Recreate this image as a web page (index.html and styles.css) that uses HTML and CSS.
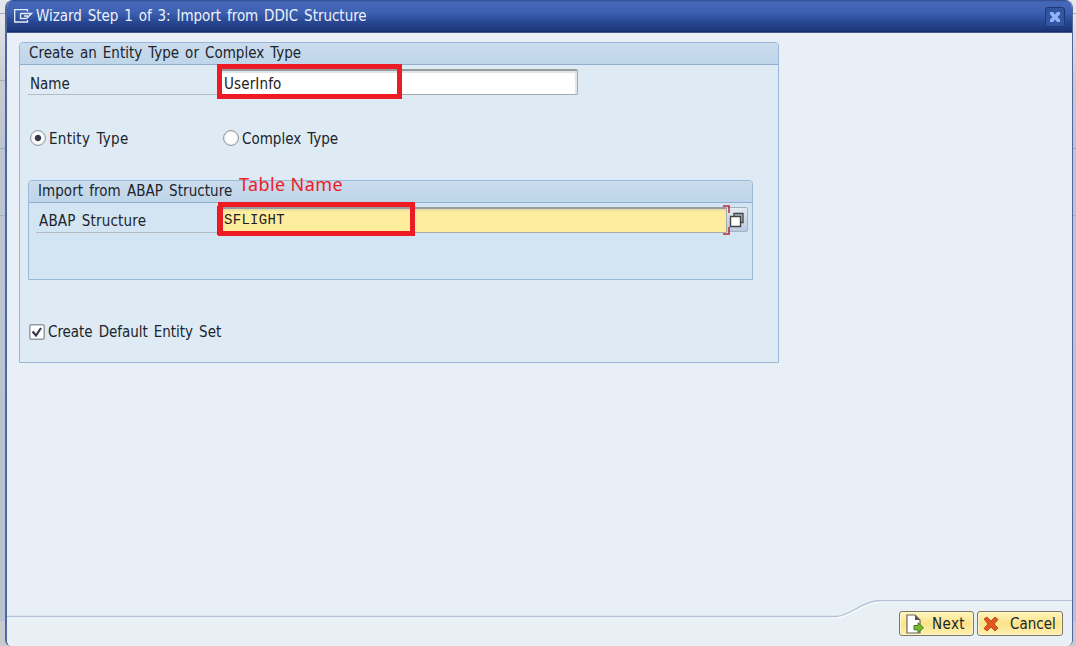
FILE: index.html
```html
<!DOCTYPE html>
<html lang="en">
<head>
<meta charset="utf-8">
<title>Wizard Step 1 of 3: Import from DDIC Structure</title>
<link rel="stylesheet" href="styles.css">
</head>
<body>
<div class="desktop">
  <main class="window">
    <header class="titlebar">
      <svg class="title-icon" width="20" height="16" viewBox="0 0 20 16" fill="none" stroke="#e4ebf8" stroke-width="1.3"><path d="M14.500 3.500V1.700H1.700V14H14.500V12M7.500 5.500V10.500H13.500L18.500 5.500H7.500M11 8h4"/></svg>
      <h1 class="title">Wizard Step 1 of 3: Import from DDIC Structure</h1>
      <button class="close" aria-label="Close"><svg width="12" height="12" viewBox="0 0 12 12"><path d="M1 1h3l2 2.500L8 1h3v2.500L8.500 6 11 8.500V11H8L6 8.500 4 11H1V8.500L3.500 6 1 3.500z" fill="#91b4f7"/></svg></button>
    </header>
    <div class="content">
      <section class="group">
        <h2 class="group-head"><span class="t-create">Create an Entity Type or Complex Type</span></h2>
        <div class="row name-row">
          <label class="label t-name">Name</label>
          <div class="field name-field"><span class="t-user">UserInfo</span><i class="mark mark-name"></i></div>
        </div>
        <div class="radios">
          <label class="choice first"><i class="radio on"></i><span class="t-entity">Entity Type</span></label>
          <label class="choice"><i class="radio"></i><span class="t-complex">Complex Type</span></label>
        </div>
        <section class="group inner">
          <h2 class="group-head"><span class="t-import">Import from ABAP Structure</span><em class="note">Table Name</em></h2>
          <div class="row abap-row">
            <label class="label t-abap">ABAP Structure</label>
            <div class="field abap-field"><span class="t-flight">SFLIGHT</span>
              <i class="bracket"></i><i class="mark mark-abap"></i></div>
            <button class="help" aria-label="Search help"><svg width="16" height="16" viewBox="0 0 16 16"><path d="M5 1.500h9v9H5z" fill="#a8b8b8" stroke="#444" stroke-width="1.300"/><path d="M1.500 4.500h10v10h-10z" fill="#fff" stroke="#444" stroke-width="1.400"/></svg></button>
            <svg class="corners" width="9" height="30" viewBox="0 0 9 30" fill="none" stroke="#b92732" stroke-width="1.500"><path d="M0 1h6v7M6 22v7H0"/></svg>
          </div>
        </section>
        <label class="choice check"><svg width="16" height="16" viewBox="0 0 16 16"><rect x=".8" y=".8" width="14.400" height="14.400" rx="1.500" fill="#fff" stroke="#999c9f" stroke-width="1.500"/><path d="M3.500 7.500 7 11.500 12 4" fill="none" stroke="#34344d" stroke-width="2.200"/></svg><span class="t-default">Create Default Entity Set</span></label>
      </section>
    </div>
    <footer class="footer">
      <svg class="footer-line" width="1065" height="46" viewBox="0 0 1065 46" fill="none"><path d="M0 16.500H829C842 16.500 856 .500 873 .500H1065V46H0z" fill="#e9f0f5"/><path d="M0 17.800H830C843 17.800 857 1.800 874 1.800H1065" stroke="#fff"/><path d="M0 16.500H829C842 16.500 856 .500 873 .500H1065" stroke="#b4c3da" stroke-width="1.300"/></svg>
      <button class="btn next"><svg width="20" height="20" viewBox="0 0 20 20"><path d="M2 1h8l5 5v13H2z" fill="#fff" stroke="#666" stroke-width="1.200"/><path d="M10 1v5h5z" fill="#555"/><path d="M9 11.500h4V8.800l5.500 5-5.500 5v-3H9z" fill="#76b82e" stroke="#3f7d20"/></svg><span class="t-next">Next</span></button>
      <button class="btn cancel"><svg width="16" height="16" viewBox="0 0 16 16"><path d="M1 3 4 1l4 4 4-4 3 2.500L11 8l4 4-3 3-4-4-4 4-3-2.500L5 8z" fill="#e2571e" stroke="#b94d21"/></svg><span class="t-cancel">Cancel</span></button>
    </footer>
  </main>
</div>
</body>
</html>
```
FILE: styles.css
```css
* { box-sizing: border-box; }
body { margin: 0; font: 15px/20px "DejaVu Sans Condensed", "DejaVu Sans", sans-serif; font-stretch: condensed; word-spacing: 1.8px; color: #20242b; }
h1, h2 { margin: 0; font-size: inherit; font-weight: 400; }
button { padding: 0; font: inherit; color: inherit; }
svg { display: block; flex: none; }
span, .title, .label { white-space: nowrap; }
.desktop { width: 1076px; height: 646px; overflow: hidden; padding-left: 5px; background: linear-gradient(#a0aec0, #a0aec0) 0 13px / 100% 1px no-repeat, linear-gradient(#a3b3bd, #a3b3bd) 0 80px / 5px 1px no-repeat, linear-gradient(#94a9b1, #94a9b1) 0 148px / 100% 1px no-repeat, linear-gradient(#a3b3bd, #a3b3bd) 0 215px / 100% 1px no-repeat, linear-gradient(#e3e7eb 0 13px, #c8ccd1 80px, #bcc5d0 148px, #b9c2d0 621px, #c7cbd0 622px); }
.window { display: flex; flex-direction: column; width: 1068px; height: 646px; background: #e8eff6; border: solid #4f679e; border-width: 0 1px 0 2px; border-radius: 8px 8px 6px 6px; overflow: hidden; }
.titlebar { display: flex; align-items: center; height: 33px; padding: 0 7px 2px 6px; background: linear-gradient(#2e4a8d 0, #4668b9 2px, #3f61b2 12px, #2c4c99 20px, #1b3678 31px, #0d265f 32px, #7b8fb5 33px); color: #edf2fc; }
.title { margin: 1px 0 0 3px; word-spacing: 1.6px; letter-spacing: -.02px; }
.close { display: grid; place-items: center; width: 20px; height: 20px; margin: 3px 0 0 auto; border: 1px solid #1d3873; border-radius: 3px; background: #3255a3; }
.content { flex: 1; padding: 9px 12px; }
.group { width: 760px; height: 321px; border: 1px solid #99b8d8; border-radius: 4px 4px 0 0; background: #deebf4; }
.group-head { display: flex; align-items: center; height: 22px; padding: 0 0 1px 9px; border-bottom: 1px solid #91afd0; background: linear-gradient(#cadced, #bfd5e9); border-radius: 3px 3px 0 0; }
.row { display: flex; }
.label { border-bottom: 1px solid #b5bbc1; }
.name-row { padding: 4px 0 0 8px; }
.name-row .label { width: 190px; height: 26px; padding: 5px 0 0 2px; }
.field { position: relative; height: 26px; border: 1px solid #a7abad; border-top: 2px solid #969b9e; border-radius: 2px; background: #fff; box-shadow: inset 0 2px 1px #e1e4e6, inset -2px 0 1px #e1e4e6; padding: 3px 0 0 5px; color: #222; }
.name-field { width: 360px; }
.t-user { letter-spacing: .15px; }
.mark { position: absolute; border: 5px solid #ed1c24; }
.mark-name { left: -2px; top: -7px; width: 185px; height: 35px; }
.radios { display: flex; align-items: center; height: 20px; margin: 33px 0 0 10px; }
.choice { display: flex; align-items: center; gap: 3px; }
.choice span { padding-top: 1px; }
.choice.first { width: 193px; }
.radio { width: 16px; height: 16px; border: 1.500px solid #949ba0; border-radius: 50%; background: #fff; box-shadow: inset 0 0 2px #bbb; }
.radio.on { background: radial-gradient(circle, #35364e 0 2.700px, #fff 3.700px); }
.t-entity { letter-spacing: .3px; }
.t-import { letter-spacing: .05px; }
.t-abap { letter-spacing: .18px; }
.t-default { letter-spacing: -.03px; }
.t-next { letter-spacing: .4px; }
.inner { width: 725px; height: 100px; margin: 32px 0 0 8px; background: #d3e5f3; }
.inner .group-head { position: relative; }
.note { position: absolute; left: 210px; top: -10px; font: 18px/26px "Noto Sans", sans-serif; letter-spacing: .4px; word-spacing: 0; color: #ed1c24; }
.abap-row { position: relative; padding: 4px 0 0 7px; }
.abap-row .label { width: 182px; height: 26px; padding: 4px 0 0 3px; }
.abap-field { width: 509px; background: #ffed9e; box-shadow: inset 0 2px 1px #e9dda2; padding-top: 1px; }
.t-flight { display: block; font: 14px/20px "Liberation Mono", monospace; letter-spacing: .3px; }
.mark-abap { left: -1px; top: -7px; width: 197px; height: 34px; }
.bracket { position: absolute; left: -2px; top: -3px; width: 5px; height: 29px; background: #b92732; }
.help { display: grid; place-items: center; width: 21px; height: 25px; border: 1px solid #a7b0bb; border-left: 0; border-radius: 2px; background: linear-gradient(#e3eaf2, #b8cae2); }
.corners { position: absolute; left: 694px; top: 2px; }
.check { margin: 41px 0 0 9px; }
.footer { position: relative; display: flex; justify-content: flex-end; gap: 3px; height: 46px; padding: 11px 9px 0 0; }
.footer-line { position: absolute; left: 0; top: 0; }
.btn { position: relative; display: flex; align-items: center; height: 25px; border: 1.500px solid #7a7867; border-radius: 3px; background: linear-gradient(#fff5bd, #fbe389 50%, #fff0b1); box-shadow: inset 0 0 0 1px #fff4c5; }
.btn span { padding-top: 1px; }
.next { width: 75px; padding-left: 5px; gap: 7px; }
.cancel { width: 86px; padding-left: 5px; gap: 11px; }
```
